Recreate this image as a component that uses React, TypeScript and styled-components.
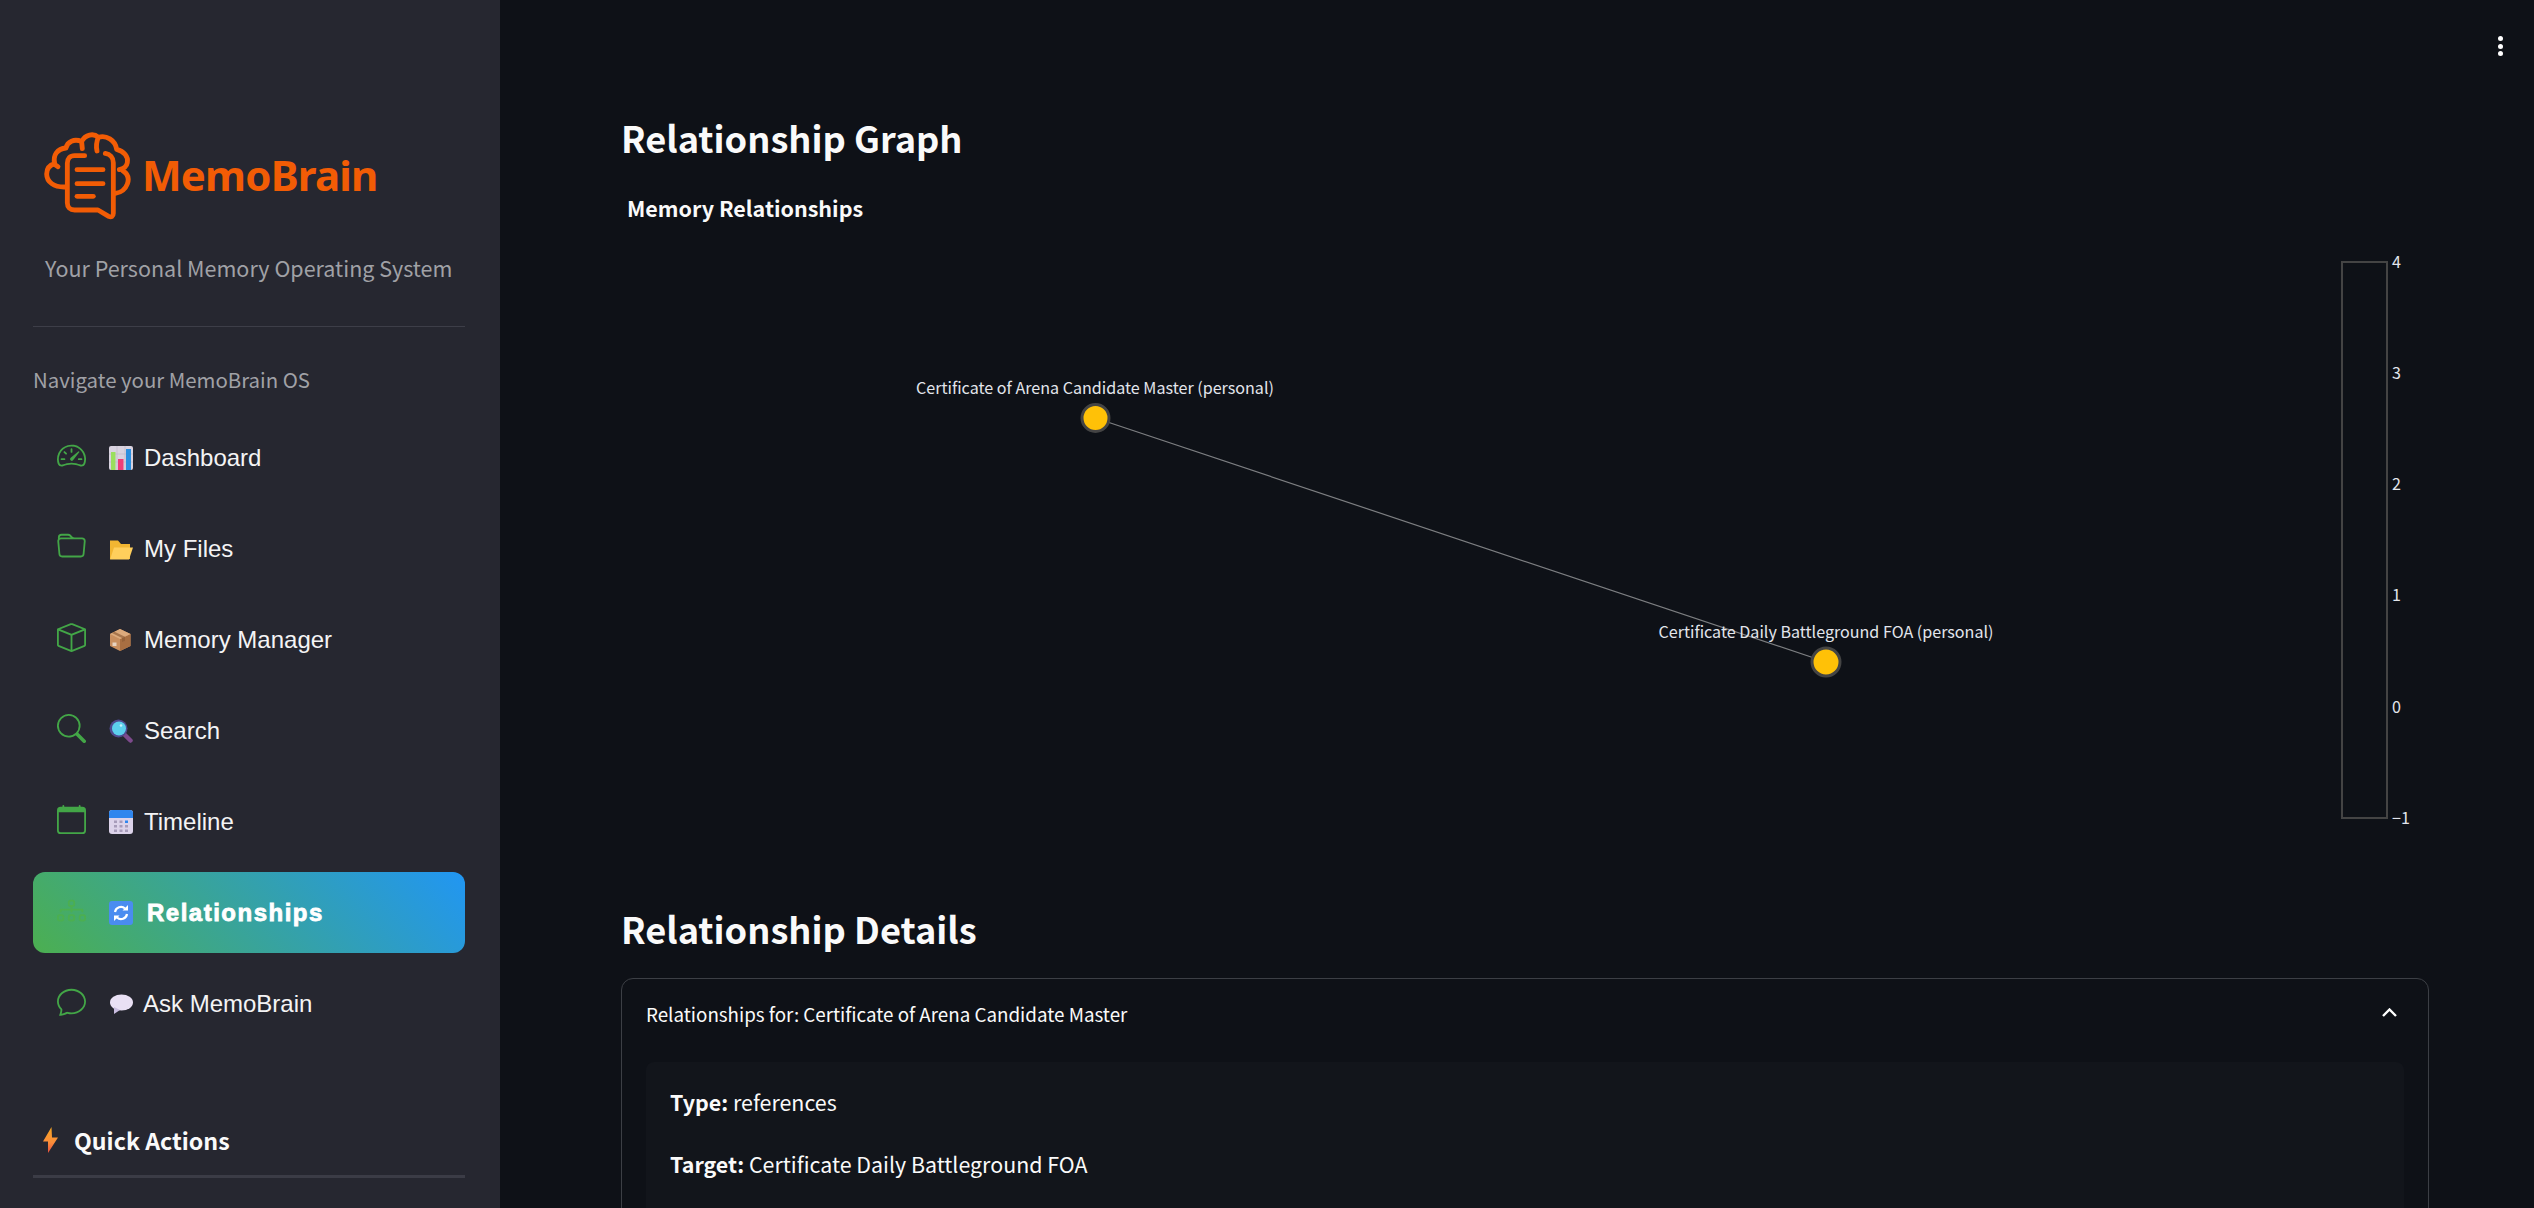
import React from 'react';
import styled, { createGlobalStyle } from 'styled-components';
import { BsSpeedometer2, BsFolder, BsBox, BsSearch, BsCalendar, BsDiagram3, BsChat } from 'react-icons/bs';

const SOURCE = `"Noto Sans CJK SC", "Noto Sans", sans-serif`;

const GlobalStyle = createGlobalStyle`
    html, body {
        margin: 0;
        height: 100%;
        overflow: hidden;
        background: #0e1117;
    }
`;

const Page = styled.div`
    display: flex;
    height: 100vh;
    overflow: hidden;
    position: relative;
    font-family: ${SOURCE};
    background: #0e1117;
    color: #fafafa;
`;

const Sidebar = styled.aside`
    flex: 0 0 500px;
    box-sizing: border-box;
    padding: 120px 35px 0 33px;
    background: #262730;
`;

const LogoRow = styled.div`
    display: flex;
    align-items: center;
    gap: 10px;
    height: 110px;
    padding-left: 9px;
`;

const LogoText = styled.span`
    font-family: "Noto Sans", sans-serif;
    font-size: 42px;
    font-weight: 700;
    letter-spacing: -0.8px;
    line-height: 50px;
    color: #f25c05;
`;

const Tagline = styled.div`
    margin: 22px 0 0 12px;
    font-size: 21.5px;
    line-height: 32px;
    color: #a0a1a6;
    white-space: nowrap;
`;

const Divider = styled.hr`
    margin: 42px 0 0;
    border: 0;
    height: 1px;
    background: #3d3e48;
`;

const NavCaption = styled.div`
    margin-top: 36px;
    font-size: 20.4px;
    line-height: 32px;
    color: #a0a1a6;
`;

const NavList = styled.nav`
    display: flex;
    flex-direction: column;
    gap: 10px;
    margin-top: 22px;
`;

const NavItem = styled.div<{ $active?: boolean }>`
    display: flex;
    align-items: center;
    height: 81px;
    padding-left: 24px;
    border-radius: 12px;
    font-family: "Liberation Sans", Arial, sans-serif;
    font-size: 24px;
    color: #fafafa;
    background: ${p => (p.$active ? 'linear-gradient(45deg, #4caf50, #2196f3)' : 'transparent')};
`;

const NavIcon = styled.span<{ $active?: boolean }>`
    display: flex;
    width: 29px;
    height: 29px;
    margin: -4px 23px 0 0;
    color: ${p => (p.$active ? '#4caf50' : '#43a647')};
    font-size: 29px;
`;

const EmojiSlot = styled.span<{ $gap: number }>`
    display: flex;
    width: 24px;
    height: 24px;
    margin-right: ${p => p.$gap}px;
`;

const NavLabel = styled.span<{ $active?: boolean }>`
    font-weight: ${p => (p.$active ? 700 : 400)};
    letter-spacing: ${p => (p.$active ? '1.5px' : '0')};
    -webkit-text-stroke: ${p => (p.$active ? '0.8px #fff' : '0')};
    color: ${p => (p.$active ? '#fff' : '#f4f4f5')};
`;

const QuickHeader = styled.div`
    display: flex;
    align-items: center;
    gap: 16px;
    margin-top: 77px;
    padding: 0 0 16px 10px;
    border-bottom: 3px solid #3b3c46;
    font-size: 23.2px;
    line-height: 38px;
    font-weight: 700;
    color: #fafafa;
`;

const Main = styled.main`
    flex: 1;
    min-width: 0;
    box-sizing: border-box;
    padding: 109px 105px 0 121px;
`;

const SectionTitle = styled.h2`
    margin: 0;
    font-size: 36.2px;
    line-height: 56px;
    font-weight: 600;
    color: #fafafa;
`;

const ChartSvg = styled.svg`
    display: block;
    width: 1808px;
    height: 660px;
    margin-top: 15px;
`;

const ChartTitle = styled.text`
    font-family: ${SOURCE};
    font-size: 21.5px;
    font-weight: 700;
    fill: #fafafa;
`;

const NodeLabel = styled.text`
    font-family: ${SOURCE};
    font-size: 16.1px;
    fill: #e2e5ec;
    text-anchor: middle;
`;

const TickLabel = styled.text`
    font-family: ${SOURCE};
    font-size: 16.1px;
    fill: #e2e5ec;
`;

const DetailsTitle = styled(SectionTitle)`
    margin-top: 60px;
`;

const Expander = styled.section`
    margin-top: 22px;
    height: 400px;
    box-sizing: border-box;
    border: 1px solid #3c3f45;
    border-radius: 12px;
    padding: 0 24px;
`;

const ExpanderHeader = styled.div`
    display: flex;
    align-items: center;
    justify-content: space-between;
    height: 68px;
    font-size: 18.8px;
    color: #fafafa;
`;

const Chevron = styled.svg`
    display: block;
    width: 15px;
    height: 9px;
    margin: -2px 7px 0 0;
    fill: none;
    stroke: #fff;
    stroke-width: 2.4;
`;

const DetailCard = styled.div`
    margin-top: 15px;
    height: 300px;
    padding: 19px 24px;
    border-radius: 8px;
    background: #12151b;
`;

const DetailLine = styled.p`
    margin: 0 0 20px;
    font-size: 21.4px;
    line-height: 42px;
    color: #fafafa;
    strong {
        font-weight: 700;
    }
`;

const MenuDots = styled.div`
    position: absolute;
    top: 36px;
    right: 31px;
    display: flex;
    flex-direction: column;
    gap: 2.5px;
    span {
        width: 5px;
        height: 5px;
        border-radius: 50%;
        background: #fff;
    }
`;

const BrainLogo = () => (
    <svg width="90" height="93.33" viewBox="36 30 270 280" fill="none" stroke="#f25c05" strokeWidth="14.500" strokeLinecap="round" strokeLinejoin="round">
        <path d="M105 207 C72 208 50 192 50 168 C50 152 60 141 74 137 C68 112 82 92 108 90 C112 70 132 62 155 70 C166 50 190 44 205 58 C228 50 256 66 260 94 C282 100 296 116 292 134 C290 146 282 152 268 155" />
        <path d="M278 158 C294 168 298 182 292 198 C286 214 272 224 256 226" />
        <path d="M84 146 L72 138" />
        <path d="M155 72 L157 92" />
        <path d="M205 58 C199 72 198 86 201 99" />
        <path d="M164 113 L134 113 C120 113 112 122 112 136 L112 254 C112 268 120 276 134 276 L204 276 L236 295 C244 299 250 295 250 286 L250 134 C250 118 240 108 226 106" />
        <path d="M141 155 L219 155" />
        <path d="M141 197 L219 197" />
        <path d="M141 235 L190 235" />
    </svg>
);

const ChartEmoji = () => (
    <svg viewBox="0 0 24 24" width="24" height="24">
        <rect width="24" height="24" rx="2" fill="#d9d3e0" />
        <path d="M8 0v24M16 0v24M0 8h24M0 16h24" stroke="#bdb6c6" strokeWidth="0.6" />
        <rect x="2" y="6" width="4.5" height="18" fill="#9adf5e" />
        <rect x="9" y="13" width="5.5" height="11" fill="#ef3d78" />
        <rect x="17" y="3" width="5" height="21" fill="#2b8fe0" />
    </svg>
);

const FolderEmoji = () => (
    <svg viewBox="0 0 24 24" width="24" height="24">
        <path d="M1 3.500h8l3 3.500h9v15H1z" fill="#f2b632" />
        <path d="M5 10.500h19l-4 12H1z" fill="#ffcf5c" />
    </svg>
);

const BoxEmoji = () => (
    <svg viewBox="0 0 24 24" width="24" height="24">
        <path d="M11 1l10.500 5v12L11 23 1 18V6z" fill="#c98f5f" />
        <path d="M11 11l10.500-5v12L11 23z" fill="#a86f42" />
        <path d="M1 6l10 5 10.500-5L11 1z" fill="#dcaa7c" />
        <path d="M5.500 3.700l10.500 5v4l-3 1.300V10L3 5z" fill="#8c5a34" opacity="0.65" />
        <rect x="3.500" y="14.500" width="4" height="3.500" fill="#e8d3c0" />
    </svg>
);

const LensEmoji = () => (
    <svg viewBox="0 0 24 24" width="24" height="24">
        <path d="M15 15l6.500 6.500" stroke="#7d4a8c" strokeWidth="4.500" strokeLinecap="round" />
        <circle cx="9.500" cy="9.500" r="9" fill="#4f4a8f" />
        <circle cx="10" cy="9.500" r="7" fill="#5ccfee" />
        <circle cx="12" cy="6.500" r="1.300" fill="#c5f2fb" />
    </svg>
);

const CalendarEmoji = () => (
    <svg viewBox="0 0 24 24" width="24" height="24">
        <rect width="24" height="24" rx="3" fill="#dcd3ea" />
        <path d="M0 8V3a3 3 0 013-3h18a3 3 0 013 3v5z" fill="#2f86ee" />
        <g fill="#a79cba">
            <rect x="5" y="10.500" width="3" height="2.500" />
            <rect x="10.500" y="10.500" width="3" height="2.500" />
            <rect x="16" y="10.500" width="3" height="2.500" fill="#2f86ee" />
            <rect x="5" y="15" width="3" height="2.500" />
            <rect x="10.500" y="15" width="3" height="2.500" />
            <rect x="16" y="15" width="3" height="2.500" />
            <rect x="5" y="19.500" width="3" height="2.500" />
            <rect x="10.500" y="19.500" width="3" height="2.500" />
            <rect x="16" y="19.500" width="3" height="2.500" />
        </g>
    </svg>
);

const CycleEmoji = () => (
    <svg viewBox="0 0 24 24" width="24" height="24">
        <rect width="24" height="24" rx="3" fill="#4a8cf0" />
        <path d="M6 11a6 6 0 0110-3.500M18 13a6 6 0 01-10 3.500" fill="none" stroke="#fff" strokeWidth="2.200" />
        <path d="M13.500 9.500h5.500V4zM10.500 14.500H5V20z" fill="#fff" />
    </svg>
);

const BubbleEmoji = () => (
    <svg viewBox="0 0 24 24" width="24" height="24">
        <ellipse cx="12.500" cy="10.500" rx="11.500" ry="8" fill="#e9e0f4" />
        <path d="M5 15l0 7 6-4z" fill="#c9bde0" />
    </svg>
);

const BoltEmoji = () => (
    <svg viewBox="0 0 15 26" width="15" height="26">
        <defs>
            <linearGradient id="bolt" x1="0.500" y1="0" x2="0.500" y2="1">
                <stop offset="0" stopColor="#f5a623" />
                <stop offset="0.6" stopColor="#fb8c3a" />
                <stop offset="1" stopColor="#ea4f3d" />
            </linearGradient>
        </defs>
        <path d="M8.500 0L0 14.500h5L5 26 15 10.500H9z" fill="url(#bolt)" />
    </svg>
);

const NAV_ITEMS = [
    { label: 'Dashboard', Icon: BsSpeedometer2, Emoji: ChartEmoji, gap: 11 },
    { label: 'My Files', Icon: BsFolder, Emoji: FolderEmoji, gap: 11 },
    { label: 'Memory Manager', Icon: BsBox, Emoji: BoxEmoji, gap: 11 },
    { label: 'Search', Icon: BsSearch, Emoji: LensEmoji, gap: 11 },
    { label: 'Timeline', Icon: BsCalendar, Emoji: CalendarEmoji, gap: 11 },
    { label: 'Relationships', Icon: BsDiagram3, Emoji: CycleEmoji, gap: 14, active: true },
    { label: 'Ask MemoBrain', Icon: BsChat, Emoji: BubbleEmoji, gap: 10 },
];

const TICKS = [
    { label: '4', y: 262 },
    { label: '3', y: 373 },
    { label: '2', y: 484 },
    { label: '1', y: 595 },
    { label: '0', y: 707 },
    { label: '\u22121', y: 818 },
];

const RelationshipChart = () => (
    <ChartSvg viewBox="621 180 1808 660">
        <ChartTitle x="627" y="217">Memory Relationships</ChartTitle>
        <line x1="1095.500" y1="418" x2="1826" y2="662" stroke="#7d7f82" strokeWidth="1.200" />
        <circle cx="1095.500" cy="418" r="13.500" fill="#ffc107" stroke="#444" strokeWidth="3" />
        <circle cx="1826" cy="662" r="14" fill="#ffc107" stroke="#444" strokeWidth="3" />
        <NodeLabel x="1095" y="394">Certificate of Arena Candidate Master (personal)</NodeLabel>
        <NodeLabel x="1826" y="638">Certificate Daily Battleground FOA (personal)</NodeLabel>
        <rect x="2342" y="262" width="45" height="556" fill="none" stroke="#444" strokeWidth="2" />
        {TICKS.map(t => (
            <TickLabel key={t.label} x="2392" y={t.y + 6}>{t.label}</TickLabel>
        ))}
    </ChartSvg>
);

const App: React.FC = () => (
    <Page>
        <GlobalStyle />
        <Sidebar>
            <LogoRow>
                <BrainLogo />
                <LogoText>MemoBrain</LogoText>
            </LogoRow>
            <Tagline>Your Personal Memory Operating System</Tagline>
            <Divider />
            <NavCaption>Navigate your MemoBrain OS</NavCaption>
            <NavList>
                {NAV_ITEMS.map(({ label, Icon, Emoji, gap, active }) => (
                    <NavItem key={label} $active={active}>
                        <NavIcon $active={active}><Icon /></NavIcon>
                        <EmojiSlot $gap={gap}><Emoji /></EmojiSlot>
                        <NavLabel $active={active}>{label}</NavLabel>
                    </NavItem>
                ))}
            </NavList>
            <QuickHeader>
                <BoltEmoji />
                Quick Actions
            </QuickHeader>
        </Sidebar>
        <Main>
            <SectionTitle>Relationship Graph</SectionTitle>
            <RelationshipChart />
            <DetailsTitle>Relationship Details</DetailsTitle>
            <Expander>
                <ExpanderHeader>
                    Relationships for: Certificate of Arena Candidate Master
                    <Chevron viewBox="0 0 15 9"><path d="M1 8l6.500-6.500L14 8" /></Chevron>
                </ExpanderHeader>
                <DetailCard>
                    <DetailLine><strong>Type:</strong> references</DetailLine>
                    <DetailLine><strong>Target:</strong> Certificate Daily Battleground FOA</DetailLine>
                </DetailCard>
            </Expander>
        </Main>
        <MenuDots><span /><span /><span /></MenuDots>
    </Page>
);

export default App;
